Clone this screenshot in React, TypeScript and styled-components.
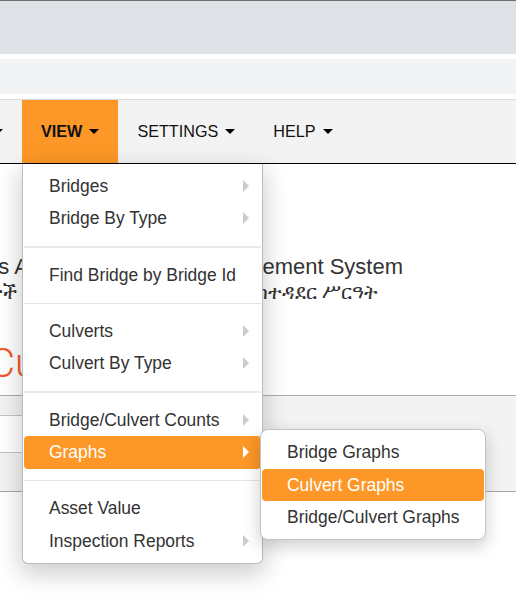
import React from 'react';
import styled, { createGlobalStyle } from 'styled-components';

const orange = '#fd9727';

const Global = createGlobalStyle`
  html, body { margin: 0; padding: 0; background: #fff; }
  body { font-family: "Liberation Sans", Arial, sans-serif; color: #333; }
  * { box-sizing: border-box; }
`;

const Page = styled.div`
  width: 516px;
  height: 600px;
  overflow: hidden;
`;

const TopBand = styled.div`
  height: 54px;
  background: #dee1e5;
  border-top: 1px solid #6b6f72;
  margin-bottom: 5px;
`;

const SubBand = styled.div`
  height: 35px;
  background: #f1f3f5;
  margin-bottom: 5px;
`;

const Nav = styled.nav`
  height: 65px;
  display: flex;
  background: #f3f3f3;
  border-top: 1px solid #dcdcdc;
  border-bottom: 1px solid #000;
`;

const Tab = styled.div<{ $active?: boolean }>`
  position: relative;
  display: flex;
  align-items: center;
  gap: 7px;
  padding: 0 19px;
  font-size: 16.2px;
  color: #111;
  height: 63px;
  background: ${p => (p.$active ? orange : 'transparent')};
  font-weight: ${p => (p.$active ? 'bold' : 'normal')};
`;

const ClippedTab = styled(Tab)`
  width: 22px;
  padding-left: 0;
  justify-content: flex-end;
`;

const Caret = styled.span`
  flex: none;
  width: 0;
  height: 0;
  border-top: 5px solid #000;
  border-left: 5px solid transparent;
  border-right: 5px solid transparent;
`;

const Menu = styled.div`
  position: absolute;
  z-index: 10;
  top: 64px;
  left: 0;
  width: 241px;
  height: 400px;
  padding: 5.9px 1px 5px;
  background: #fff;
  border: 1px solid #bdbdbd;
  border-top: 0;
  border-radius: 0 0 6px 6px;
  font-weight: normal;
  box-shadow: 0 8px 24px 2px rgba(0, 0, 0, 0.2);
`;

const SubMenu = styled.div`
  position: absolute;
  z-index: 11;
  top: -7px;
  left: 236px;
  width: 226px;
  padding: 6px 1px 5.5px;
  background: #fff;
  border: 1px solid #c4c4c4;
  border-radius: 8px;
  box-shadow: 0 6px 16px 1px rgba(0, 0, 0, 0.18);
`;

const Item = styled.div<{ $active?: boolean }>`
  position: relative;
  height: 32.5px;
  line-height: 32.5px;
  padding-left: 25px;
  font-size: 17.45px;
  white-space: nowrap;
  border-radius: 4px;
  color: ${p => (p.$active ? '#fff' : '#333')};
  background: ${p => (p.$active ? orange : 'transparent')};
`;

const Arrow = styled.span<{ $active?: boolean }>`
  position: absolute;
  top: 10px;
  right: 12px;
  width: 0;
  height: 0;
  border-top: 6.5px solid transparent;
  border-bottom: 6.5px solid transparent;
  border-left: 6px solid ${p => (p.$active ? '#fff' : '#ccc')};
`;

const Divider = styled.div<{ $thick?: boolean; $loose?: boolean }>`
  height: ${p => (p.$thick ? '2px' : '1px')};
  margin: 11.05px 0 ${p => (p.$loose ? '11.3px' : '11.05px')};
  background: ${p => (p.$thick ? '#e9e9e9' : '#e5e5e5')};
`;

const Main = styled.main`
  height: 231px;
  padding-top: 90px;
  margin-left: -70px;
  white-space: nowrap;
`;

const Heading = styled.div`
  width: 473px;
  display: flex;
  flex-direction: column;
  align-items: flex-end;
`;

const Title = styled.div`
  font-size: 22px;
  line-height: 26px;
  color: #333;
`;

const AmharicTitle = styled.div`
  margin-right: 25px;
  font-family: "Noto Sans", "DejaVu Sans", "Liberation Serif", serif;
  font-size: 20px;
  line-height: 24px;
  color: #333;
`;

const AssetLabel = styled.div`
  margin: 36px 0 0 59px;
  font-family: Roboto, "Liberation Sans", sans-serif;
  font-weight: 300;
  font-size: 40px;
  line-height: 48px;
  color: #f0592b;
`;

const Table = styled.div`
  display: flex;
  height: 97px;
  border-top: 1px solid #adadad;
  border-bottom: 1px solid #a5a5a5;
`;

const LeftCol = styled.div`
  width: 200px;
  display: flex;
  flex-direction: column;
`;

const RightCol = styled.div`
  flex: 1;
  background: #f3f3f3;
`;

const Row = styled.div<{ $height: number; $shaded?: boolean }>`
  height: ${p => p.$height}px;
  background: ${p => (p.$shaded ? '#f3f3f3' : '#fff')};
  & + & {
    border-top: 1px solid #c4c4c4;
  }
`;

export default function App() {
  return (
    <Page>
      <Global />
      <TopBand />
      <SubBand />
      <Nav>
        <ClippedTab>
          <Caret />
        </ClippedTab>
        <Tab $active>
          VIEW <Caret />
          <Menu>
            <Item>Bridges<Arrow /></Item>
            <Item>Bridge By Type<Arrow /></Item>
            <Divider $thick />
            <Item>Find Bridge by Bridge Id</Item>
            <Divider />
            <Item>Culverts<Arrow /></Item>
            <Item>Culvert By Type<Arrow /></Item>
            <Divider $thick />
            <Item>Bridge/Culvert Counts<Arrow /></Item>
            <Item $active>
              Graphs
              <Arrow $active />
              <SubMenu>
                <Item>Bridge Graphs</Item>
                <Item $active>Culvert Graphs</Item>
                <Item>Bridge/Culvert Graphs</Item>
              </SubMenu>
            </Item>
            <Divider $loose />
            <Item>Asset Value</Item>
            <Item>Inspection Reports<Arrow /></Item>
          </Menu>
        </Tab>
        <Tab>SETTINGS <Caret /></Tab>
        <Tab>HELP <Caret /></Tab>
      </Nav>
      <Main>
        <Heading>
          <Title>Bridges Asset And Culvert Management System</Title>
          <AmharicTitle>የድልድዮች የሀብትና{'\u00A0\u00A0\u00A0\u00A0'} የከልቨርቶች ሀብት አስተዳደር ሥርዓት</AmharicTitle>
        </Heading>
        <AssetLabel>Culverts</AssetLabel>
      </Main>
      <Table>
        <LeftCol>
          <Row $height={19} $shaded />
          <Row $height={37} />
          <Row $height={39} $shaded />
        </LeftCol>
        <RightCol />
      </Table>
    </Page>
  );
}
